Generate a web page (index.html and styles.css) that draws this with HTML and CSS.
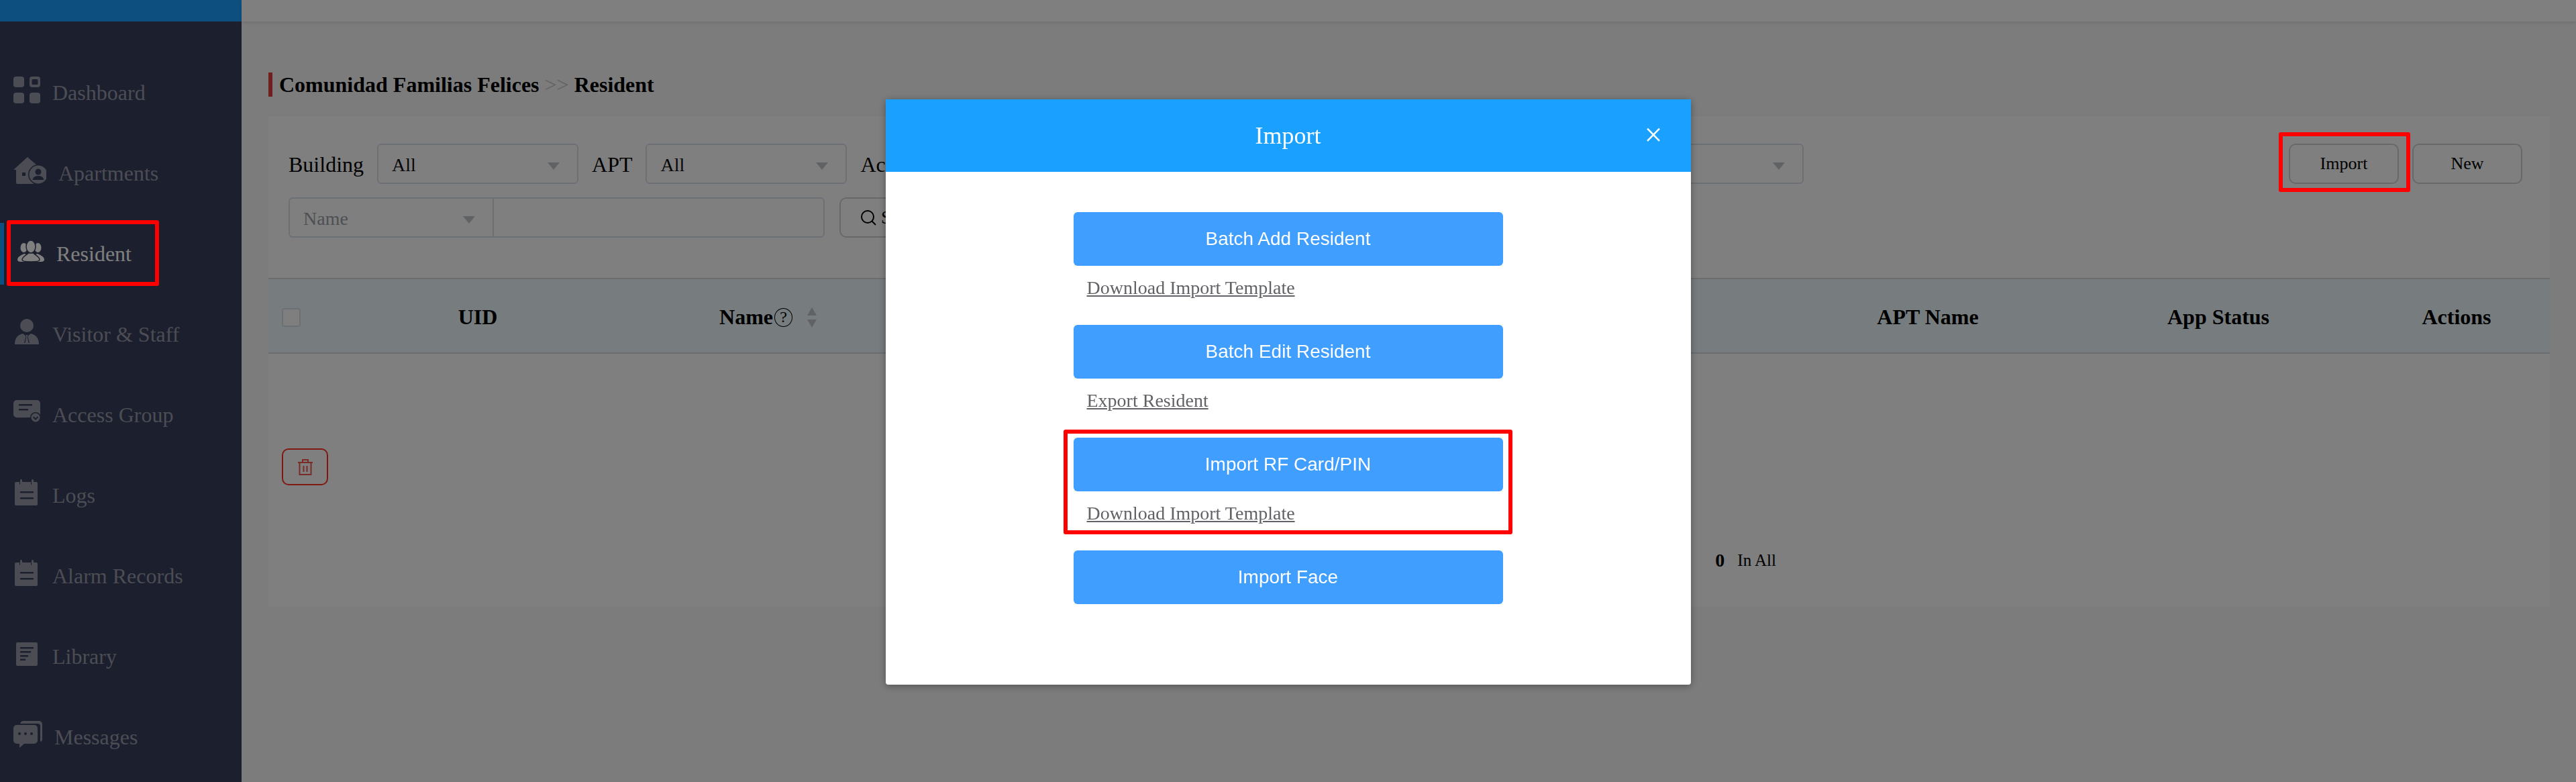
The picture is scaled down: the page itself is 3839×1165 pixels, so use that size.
FILE: index.html
```html
<!DOCTYPE html>
<html lang="en">
<head>
<meta charset="utf-8">
<title>Resident</title>
<link rel="stylesheet" href="styles.css">
</head>
<body>
<div class="app">
  <aside class="sidebar">
    <div class="brand"></div>
    <nav class="nav">
      <a class="nav-item">
        <svg class="nav-icon" width="40" height="40" viewBox="0 0 40 40"><rect width="16" height="16" rx="4"/><path fill-rule="evenodd" d="M28 0h8a4 4 0 0 1 4 4v8a4 4 0 0 1-4 4h-8a4 4 0 0 1-4-4V4a4 4 0 0 1 4-4zm1 4a1.500 1.500 0 0 0-1.500 1.500v5A1.500 1.500 0 0 0 29 12h6a1.500 1.500 0 0 0 1.500-1.500v-5A1.500 1.500 0 0 0 35 4z"/><rect y="24" width="16" height="16" rx="4"/><rect x="24" y="24" width="16" height="16" rx="4"/></svg>
        <span>Dashboard</span>
      </a>
      <a class="nav-item">
        <svg class="nav-icon" width="49" height="40" viewBox="0 0 49 40"><path d="M21 0 36 13 30 40H6a2 2 0 0 1-2-2V19H0z"/><rect class="cut" x="13" y="23" width="5" height="5"/><circle cx="37" cy="26" r="15" class="cut"/><circle cx="37" cy="26" r="13.500"/><circle class="cut" cx="37" cy="22" r="4.500"/><path class="cut" d="M28.500 34c1-4.500 4.500-6 8.500-6s7.500 1.500 8.500 6z"/></svg>
        <span>Apartments</span>
      </a>
      <a class="nav-item nav-item-active">
        <svg class="nav-icon" width="46" height="40" viewBox="0 0 46 40"><ellipse cx="15.500" cy="15" rx="5" ry="7"/><ellipse cx="36.500" cy="15" rx="5" ry="7"/><path d="M6 33c0-5 6-7 10-9l6 2v10H11c-3 0-5-1-5-3zM46 33c0-5-6-7-10-9l-6 2v10h11c3 0 5-1 5-3z"/><ellipse class="cut-line" cx="26" cy="13.500" rx="7" ry="9.500"/><path class="cut-line" d="M13 33c0-5 7-7 9-10h8c2 3 9 5 9 10 0 2-3 3-13 3s-13-1-13-3z"/></svg>
        <span>Resident</span>
      </a>
      <a class="nav-item">
        <svg class="nav-icon" width="40" height="40" viewBox="0 0 40 40"><circle cx="20" cy="11" r="10"/><path d="M2 39c0-9 4-14 12-16l4 3h4l4-3c8 2 12 7 12 16z"/><path class="cut" d="M17 24h6l-1.500 3.500L24 37h-8l2.500-9.500z"/><path d="M18.500 25h3l-.8 2.500 1.800 9.500h-5l1.800-9.500z"/></svg>
        <span>Visitor &amp; Staff</span>
      </a>
      <a class="nav-item">
        <svg class="nav-icon" width="40" height="40" viewBox="0 0 40 40"><rect y="2" width="40" height="26" rx="5"/><rect class="cut" x="8" y="8" width="20" height="2.500"/><rect class="cut" x="8" y="15" width="14" height="2.500"/><circle class="cut" cx="33" cy="28" r="8"/><circle cx="33" cy="28" r="6.500"/><path class="cut-stroke" d="M29.500 27l3.500 3.500 3.500-3.500"/></svg>
        <span>Access Group</span>
      </a>
      <a class="nav-item">
        <svg class="nav-icon" width="40" height="40" viewBox="0 0 40 40"><path d="M4 4h5v4h3V4h14v4h3V4h5a2 2 0 0 1 2 2v31a2 2 0 0 1-2 2H4a2 2 0 0 1-2-2V6a2 2 0 0 1 2-2z"/><rect x="10" y="0" width="3" height="9" rx="1.500"/><rect x="27" y="0" width="3" height="9" rx="1.500"/><rect class="cut" x="10" y="18" width="20" height="2.500"/><rect class="cut" x="10" y="27" width="20" height="2.500"/></svg>
        <span>Logs</span>
      </a>
      <a class="nav-item">
        <svg class="nav-icon" width="40" height="40" viewBox="0 0 40 40"><path d="M4 4h5v4h3V4h14v4h3V4h5a2 2 0 0 1 2 2v31a2 2 0 0 1-2 2H4a2 2 0 0 1-2-2V6a2 2 0 0 1 2-2z"/><rect x="10" y="0" width="3" height="9" rx="1.500"/><rect x="27" y="0" width="3" height="9" rx="1.500"/><rect class="cut" x="10" y="18" width="20" height="2.500"/><rect class="cut" x="10" y="27" width="20" height="2.500"/></svg>
        <span>Alarm Records</span>
      </a>
      <a class="nav-item">
        <svg class="nav-icon" width="40" height="40" viewBox="0 0 40 40"><rect x="4" y="3" width="32" height="35" rx="2"/><rect class="cut" x="10" y="10" width="20" height="2.500"/><rect class="cut" x="10" y="16" width="16" height="2.500"/><rect class="cut" x="10" y="22" width="12" height="2.500"/><rect class="cut" x="10" y="27.500" width="8" height="2.500"/></svg>
        <span>Library</span>
      </a>
      <a class="nav-item">
        <svg class="nav-icon" width="43" height="40" viewBox="0 0 43 40"><path d="M10 5a5 5 0 0 1 5-5h23a5 5 0 0 1 5 5v22a4 4 0 0 1-3 4V8a4 4 0 0 0-4-4H10z"/><path d="M5 6h26a5 5 0 0 1 5 5v18a5 5 0 0 1-5 5H16L9 40v-6H5a5 5 0 0 1-5-5V11a5 5 0 0 1 5-5z"/><circle class="cut" cx="9" cy="19" r="2"/><circle class="cut" cx="18" cy="19" r="2"/><circle class="cut" cx="27" cy="19" r="2"/></svg>
        <span>Messages</span>
      </a>
    </nav>
  </aside>
  <main class="main">
    <div class="topbar"></div>
    <div class="content">
      <h1 class="title">Comunidad Familias Felices <span class="title-sep">&gt;&gt;</span> Resident</h1>
      <section class="card">
        <div class="filters">
          <div class="filter-rows">
            <div class="filter-row">
              <label class="filter-label">Building</label>
              <div class="select"><span>All</span><i class="caret"></i></div>
              <label class="filter-label">APT</label>
              <div class="select"><span>All</span><i class="caret"></i></div>
              <label class="filter-label">Access Group</label>
              <div class="select select-wide"><span>All</span><i class="caret"></i></div>
            </div>
            <div class="filter-row">
              <div class="search-group">
                <div class="select select-key"><span>Name</span><i class="caret"></i></div>
                <div class="search-input"></div>
              </div>
              <button class="btn btn-search">
                <svg width="26" height="26" viewBox="0 0 26 26"><circle cx="12" cy="12" r="9" fill="none" stroke="currentColor" stroke-width="2"/><path d="M18.500 18.500 24 24" stroke="currentColor" stroke-width="2"/></svg>
                <span>Search</span>
              </button>
            </div>
          </div>
          <div class="actions">
            <button class="btn btn-action">Import</button>
            <button class="btn btn-action">New</button>
          </div>
        </div>
        <div class="table-head">
          <div class="cell cell-check"><i class="checkbox"></i></div>
          <div class="cell">UID</div>
          <div class="cell">Name<i class="help">?</i><i class="sort"><b class="sort-up"></b><b class="sort-down"></b></i></div>
          <div class="cell"></div>
          <div class="cell">APT Name</div>
          <div class="cell">App Status</div>
          <div class="cell">Actions</div>
        </div>
        <div class="table-tools">
          <button class="btn-delete">
            <svg width="24" height="24" viewBox="0 0 24 24" fill="none" stroke="currentColor" stroke-width="2"><path d="M1 5h22M8 5V1h8v4M3.500 5v18h17V5M9.500 10v9M14.500 10v9"/></svg>
          </button>
        </div>
        <div class="pager"><b class="pager-count">0</b><span>In All</span></div>
      </section>
    </div>
  </main>
</div>
<div class="mask">
  <div class="modal">
    <header class="modal-head">
      <h2 class="modal-title">Import</h2>
      <span class="modal-close">×</span>
    </header>
    <div class="modal-body">
      <div class="import-group">
        <button class="btn-primary">Batch Add Resident</button>
        <a class="import-link">Download Import Template</a>
      </div>
      <div class="import-group">
        <button class="btn-primary">Batch Edit Resident</button>
        <a class="import-link">Export Resident</a>
      </div>
      <div class="import-group">
        <button class="btn-primary">Import RF Card/PIN</button>
        <a class="import-link">Download Import Template</a>
      </div>
      <div class="import-group import-group-last">
        <button class="btn-primary">Import Face</button>
      </div>
    </div>
  </div>
</div>
<div class="mark mark-nav"></div>
<div class="mark mark-import"></div>
<div class="mark mark-rf"></div>
</body>
</html>
```

FILE: styles.css
```css
* { box-sizing: border-box; }
html, body { margin: 0; height: 100%; overflow: hidden; }
body {
  position: relative;
  font-family: "Liberation Serif", "Times New Roman", serif;
  color: #000;
  background: #f8f8f8;
}
.app { display: flex; height: 1165px; }

/* sidebar */
.sidebar { width: 360px; flex: none; background: #383e5c; }
.brand { height: 32px; background: #1aa1ff; }
.nav { padding-top: 46px; }
.nav-item {
  position: relative;
  display: flex;
  align-items: center;
  gap: 18px;
  height: 120px;
  padding-left: 20px;
  font-size: 32px;
  color: #989ba8;
}
.nav-icon { flex: none; margin-top: -8px; fill: currentColor; }
.nav-item .cut { fill: #383e5c; }
.nav-item .cut-line { stroke: #383e5c; stroke-width: 1.5; }
.nav-item .cut-stroke { fill: none; stroke: #383e5c; stroke-width: 2; }
.nav-item-active { color: #fff; }
.nav-item-active::before {
  content: "";
  position: absolute;
  left: 0;
  top: 14px;
  bottom: 14px;
  width: 6px;
  background: #1aa1ff;
}

/* main */
.main { flex: 1; min-width: 0; }
.topbar { height: 32px; background: #fff; box-shadow: 0 1px 6px rgba(0, 0, 0, .14); }
.content { padding: 76px 39px 0 40px; }
.title {
  margin: 0;
  height: 36px;
  padding-left: 10px;
  border-left: 6px solid #e23c3c;
  font-size: 32px;
  line-height: 37px;
  font-weight: 700;
  white-space: nowrap;
}
.title-sep { font-weight: 400; color: #c4c4c4; }
.card { margin-top: 29px; height: 731px; background: #fff; }

/* filters */
.filters {
  display: flex;
  justify-content: space-between;
  height: 241px;
  padding: 41px 41px 0 30px;
}
.filter-rows { display: flex; flex-direction: column; gap: 20px; }
.filter-row { display: flex; align-items: center; gap: 20px; height: 60px; }
.filter-label { padding-top: 2px; font-size: 32px; white-space: nowrap; }
.select {
  display: flex;
  align-items: center;
  justify-content: space-between;
  width: 300px;
  height: 60px;
  padding: 3px 26px 0 20px;
  border: 2px solid #d8dee8;
  border-radius: 6px;
  background: #fff;
  font-size: 28px;
  color: #111;
}
.select-wide { width: 1205px; }
.caret {
  width: 0;
  height: 0;
  margin-top: 3px;
  border-left: 9px solid transparent;
  border-right: 9px solid transparent;
  border-top: 11px solid #c0c4cc;
}
.search-group { display: flex; width: 799px; }
.select-key {
  width: 304px;
  border-radius: 6px 0 0 6px;
  border-right-width: 0;
  color: #9a9fa8;
}
.search-input {
  flex: 1;
  height: 60px;
  border: 2px solid #d8dee8;
  border-radius: 0 6px 6px 0;
  background: #fff;
}
.btn {
  display: inline-flex;
  align-items: center;
  justify-content: center;
  height: 60px;
  border: 2px solid #cfd1d4;
  border-radius: 10px;
  background: #fff;
  font-family: inherit;
  font-size: 26px;
  color: #000;
}
.btn-search { gap: 6px; width: 170px; margin-left: 2px; padding: 0 0 0 28px; justify-content: flex-start; font-size: 28px; }
.actions { display: flex; gap: 20px; }
.btn-action { width: 164px; }

/* table */
.table-head {
  display: grid;
  grid-template-columns: 90px 444px 421px 1320px 396px 470px 240px 19px;
  align-items: center;
  height: 113px;
  padding-top: 4px;
  border-top: 2px solid #d8dadc;
  border-bottom: 2px solid #d8dadc;
  background: #eef8fc;
  font-size: 32px;
  font-weight: 700;
}
.cell { display: flex; align-items: center; justify-content: center; }
.cell-check { justify-content: flex-start; padding-left: 20px; }
.checkbox {
  width: 28px;
  height: 28px;
  border: 2px solid #d8dee8;
  border-radius: 4px;
  background: #fff;
}
.help {
  display: flex;
  align-items: center;
  justify-content: center;
  width: 27px;
  height: 28px;
  margin-left: 2px;
  border: 1.5px solid #000;
  border-radius: 50%;
  font-size: 24px;
  font-style: normal;
  font-weight: 400;
}
.sort { display: flex; flex-direction: column; gap: 6px; margin-left: 22px; }
.sort-up, .sort-down { width: 0; height: 0; border-left: 7px solid transparent; border-right: 7px solid transparent; }
.sort-up { border-bottom: 12px solid #c0c4cc; }
.sort-down { border-top: 12px solid #c0c4cc; }
.table-tools { padding: 141px 0 0 20px; }
.btn-delete {
  display: flex;
  align-items: center;
  justify-content: center;
  width: 69px;
  height: 55px;
  padding: 0;
  border: 2px solid #ff3322;
  border-radius: 10px;
  background: #fff;
  color: #f0584a;
}
.pager {
  display: flex;
  justify-content: flex-end;
  align-items: center;
  gap: 19px;
  height: 30px;
  margin-top: 97px;
  padding-right: 1153px;
  font-size: 25px;
}
.pager-count { font-size: 28px; }

/* modal */
.mask {
  position: fixed;
  inset: 0;
  display: flex;
  justify-content: center;
  align-items: flex-start;
  padding-top: 148px;
  background: rgba(0, 0, 0, .5);
}
.modal {
  width: 1200px;
  background: #fff;
  border-radius: 4px;
  box-shadow: 0 2px 12px rgba(0, 0, 0, .35);
}
.modal-head {
  position: relative;
  display: flex;
  align-items: center;
  justify-content: center;
  height: 108px;
  background: #1aa1ff;
  color: #fff;
}
.modal-title { margin: 0; font-size: 36px; font-weight: 400; }
.modal-close {
  position: absolute;
  right: 42px;
  top: 27px;
  font-family: "Liberation Serif", "Times New Roman", serif;
  font-size: 48px;
  line-height: 52px;
}
.modal-body {
  display: flex;
  flex-direction: column;
  align-items: center;
  padding: 60px 0 120px;
}
.import-group { width: 640px; height: 168px; }
.import-group-last { height: 80px; }
.btn-primary {
  display: block;
  width: 100%;
  height: 80px;
  border: 0;
  border-radius: 6px;
  background: #409eff;
  color: #fff;
  font-family: "Liberation Sans", Arial, sans-serif;
  font-size: 28px;
}
.import-link {
  display: inline-block;
  margin: 17px 0 0 20px;
  font-size: 28px;
  line-height: 32px;
  color: #606266;
  text-decoration: underline;
}

/* annotation boxes */
.mark {
  position: absolute;
  border: 6px solid #f00;
  border-radius: 3px;
}
.mark-nav { left: 10px; top: 328px; width: 227px; height: 98px; }
.mark-import { left: 3396px; top: 197px; width: 196px; height: 89px; }
.mark-rf { left: 1585px; top: 640px; width: 669px; height: 156px; }
```
